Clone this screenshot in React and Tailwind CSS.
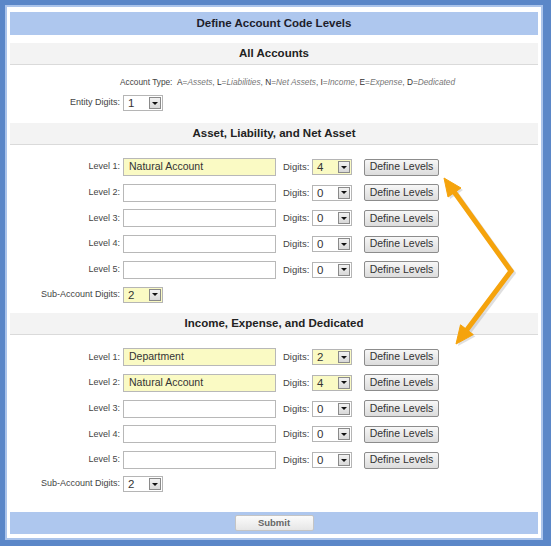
import React from "react";

const font = { fontFamily: '"Liberation Sans", Arial, sans-serif' };

function Select({ value, hl }) {
  return (
    <div className={`flex h-[16px] w-[40px] border border-[#b5b5b5] ${hl ? "bg-[#fafac4]" : "bg-white"}`}>
      <div className="flex-1 pl-[4px] text-[11.5px] leading-[14px] text-[#333]">{value}</div>
      <div className="m-[1px] flex w-[12px] items-center justify-center border border-[#8a8a8a] bg-gradient-to-b from-[#f2f2f2] to-[#d8d8d8]">
        <div className="h-0 w-0 border-l-[3px] border-r-[3px] border-t-[3px] border-l-transparent border-r-transparent border-t-[#111]" />
      </div>
    </div>
  );
}

function SectionHeader({ children, className = "" }) {
  return (
    <div className={`flex h-[22px] shrink-0 items-center justify-center border-b border-[#dadada] bg-[#f3f3f3] text-[11.5px] font-bold text-[#222] ${className}`}>
      {children}
    </div>
  );
}

function Label({ children }) {
  return <div className="w-[110px] text-right text-[9px] text-[#444]">{children}</div>;
}

function LevelRow({ n, text, digits }) {
  const hl = !!text;
  return (
    <div className="flex h-[18px] items-center">
      <Label>Level {n}:</Label>
      <div className={`ml-[3px] flex h-[18px] w-[153px] items-center border border-[#b8b8b8] pl-[5px] text-[10.5px] text-[#333] ${hl ? "bg-[#fafac4]" : "bg-white"}`}>
        {text}
      </div>
      <div className="ml-[7px] w-[29px] text-[9.5px] text-[#444]">Digits:</div>
      <Select value={digits} hl={hl} />
      <button className="ml-[12px] flex h-[17px] w-[75px] items-center justify-center rounded-[2px] border border-[#8c8c8c] bg-gradient-to-b from-[#f7f7f7] to-[#dcdcdc] text-[10.5px] text-[#333]">
        Define Levels
      </button>
    </div>
  );
}

function SubRow({ value, hl }) {
  return (
    <div className="flex h-[16px] items-center">
      <Label>Sub-Account Digits:</Label>
      <div className="ml-[3px]">
        <Select value={value} hl={hl} />
      </div>
    </div>
  );
}

const K = ({ k, v, last }) => (
  <>
    <span className="text-[#333]">{k}</span>
    <span className="text-[#666]">=</span>
    <span className="italic text-[#777]">{v}</span>
    {!last && <span className="text-[#666]">, </span>}
  </>
);

export default function App() {
  return (
    <div style={font} className="relative h-[546px] w-[551px] bg-[#5b87c8] pb-[6px] pl-[5px] pr-[8px] pt-[5px]">
      <div className="flex h-full flex-col border-2 border-[#abc4eb] bg-white px-[3px] pb-[4px] pt-[5px]">
        <div className="flex h-[23px] shrink-0 items-center justify-center bg-[#aec7ee] text-[11.5px] font-bold text-[#1d1d2b]">
          Define Account Code Levels
        </div>
        <SectionHeader className="mt-[8px]">All Accounts</SectionHeader>
        <div className="mt-[11px] h-[12px] pl-[110px] text-[8.3px] leading-[12px] whitespace-nowrap">
          <span className="text-[#444]">Account Type:&nbsp;&nbsp;</span>
          <K k="A" v="Assets" />
          <K k="L" v="Liabilities" />
          <K k="N" v="Net Assets" />
          <K k="I" v="Income" />
          <K k="E" v="Expense" />
          <K k="D" v="Dedicated" last />
        </div>
        <div className="mt-[7px] flex h-[16px] items-center">
          <Label>Entity Digits:</Label>
          <div className="ml-[3px]">
            <Select value="1" />
          </div>
        </div>

        <SectionHeader className="mt-[12px]">Asset, Liability, and Net Asset</SectionHeader>
        <div className="mt-[13px] flex flex-col gap-[7.7px]">
          <LevelRow n={1} text="Natural Account" digits="4" />
          <LevelRow n={2} digits="0" />
          <LevelRow n={3} digits="0" />
          <LevelRow n={4} digits="0" />
          <LevelRow n={5} digits="0" />
        </div>
        <div className="mt-[8px]">
          <SubRow value="2" hl />
        </div>

        <SectionHeader className="mt-[10.5px]">Income, Expense, and Dedicated</SectionHeader>
        <div className="mt-[13px] flex flex-col gap-[7.7px]">
          <LevelRow n={1} text="Department" digits="2" />
          <LevelRow n={2} text="Natural Account" digits="4" />
          <LevelRow n={3} digits="0" />
          <LevelRow n={4} digits="0" />
          <LevelRow n={5} digits="0" />
        </div>
        <div className="mt-[7px]">
          <SubRow value="2" />
        </div>

        <div className="mt-auto flex h-[22px] shrink-0 items-center justify-center bg-[#aec7ee]">
          <button className="flex h-[16px] w-[79px] items-center justify-center rounded-[2px] border border-[#c4c4c4] bg-gradient-to-b from-[#fbfbfb] to-[#e6e6e6] text-[9.5px] font-bold text-[#666]">
            Submit
          </button>
        </div>
      </div>

      <svg className="pointer-events-none absolute left-0 top-0" width="551" height="546" viewBox="0 0 551 546">
        <g opacity="0.18" transform="translate(2,2)">
          <line x1="511" y1="271" x2="454.6" y2="192.5" stroke="#555" strokeWidth="5" strokeLinecap="round" />
          <polygon points="444,178 461,188 448,197" fill="#555" />
          <line x1="511" y1="271" x2="466.9" y2="329.7" stroke="#555" strokeWidth="5" strokeLinecap="round" />
          <polygon points="456,344 473.3,334.6 460.5,324.8" fill="#555" />
        </g>
        <line x1="511" y1="271" x2="454.6" y2="192.5" stroke="#f5a30c" strokeWidth="5" strokeLinecap="round" />
        <polygon points="444,178 461,188 448,197" fill="#f5a30c" stroke="#f5a30c" strokeLinejoin="round" />
        <line x1="511" y1="271" x2="466.9" y2="329.7" stroke="#f5a30c" strokeWidth="5" strokeLinecap="round" />
        <polygon points="456,344 473.3,334.6 460.5,324.8" fill="#f5a30c" stroke="#f5a30c" strokeLinejoin="round" />
      </svg>
    </div>
  );
}
